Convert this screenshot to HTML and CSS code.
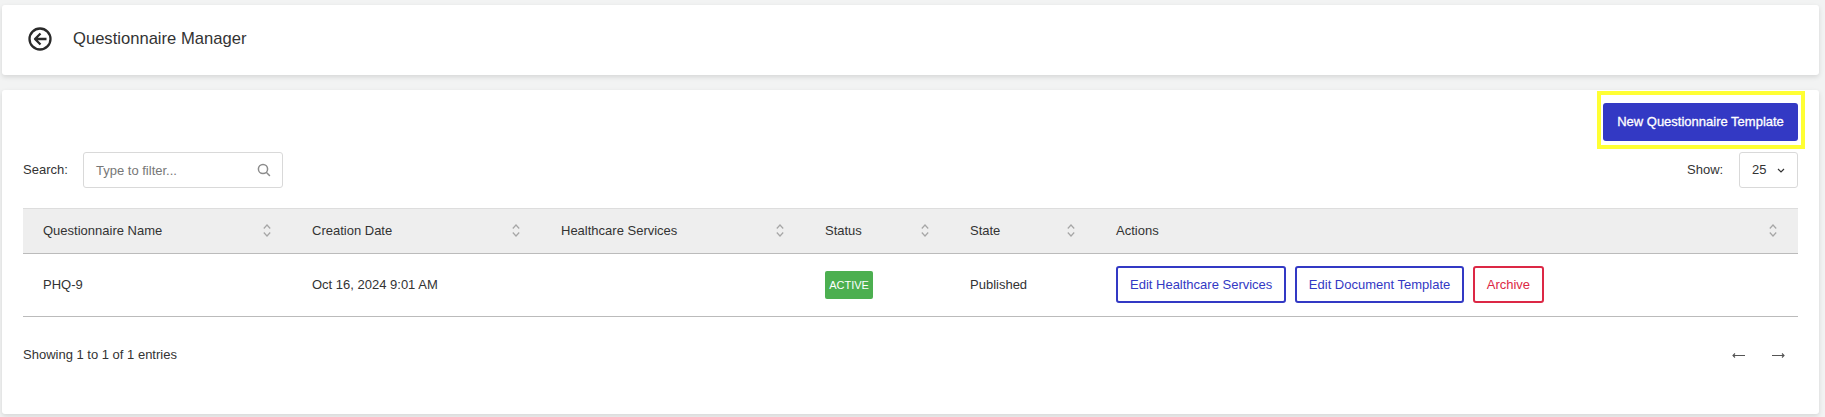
FILE: index.html
```html
<!DOCTYPE html>
<html lang="en">
<head>
<meta charset="utf-8">
<title>Questionnaire Manager</title>
<link rel="stylesheet" href="styles.css">
</head>
<body>
<header class="card topbar">
  <svg class="back" viewBox="0 0 24 24" width="24" height="24" fill="none" stroke="#2a2a2a" stroke-width="2.300" stroke-linejoin="round"><circle cx="12" cy="12" r="10.500"/><path d="M12.500 6.500 7 12l5.500 5.500M7 12H18.500"/></svg>
  <h1 class="title">Questionnaire Manager</h1>
</header>
<main class="card panel">
  <div class="actions-top">
    <div class="highlighted">
      <button class="primary">New Questionnaire Template</button>
    </div>
  </div>
  <div class="filters">
    <label class="search-label">Search:</label>
    <div class="search">
      <span class="placeholder">Type to filter...</span>
      <svg viewBox="0 0 14 14" width="14" height="14" fill="none" stroke="#8c8c8c" stroke-width="1.500" stroke-linecap="round"><circle cx="6" cy="6" r="4.600"/><path d="m9.500 9.500 3 3"/></svg>
    </div>
    <span class="show-label">Show:</span>
    <div class="show">
      <span class="show-value">25</span>
      <svg viewBox="0 0 8 5" width="8" height="5" fill="none" stroke="#333" stroke-width="1.200"><path d="m1 1 3 3 3-3"/></svg>
    </div>
  </div>
  <table class="grid">
    <colgroup>
      <col class="c1"><col class="c2"><col class="c3"><col class="c4"><col class="c5"><col>
    </colgroup>
    <thead>
      <tr>
        <th><div class="th">Questionnaire Name<svg class="sort" viewBox="0 0 8 13" width="8" height="13" fill="none" stroke="#a6a6a6" stroke-width="1.200"><path d="m.8 4.500 3.200-3.500 3.200 3.500M.8 8.500l3.200 3.500 3.200-3.500"/></svg></div></th>
        <th><div class="th">Creation Date<svg class="sort" viewBox="0 0 8 13" width="8" height="13" fill="none" stroke="#a6a6a6" stroke-width="1.200"><path d="m.8 4.500 3.200-3.500 3.200 3.500M.8 8.500l3.200 3.500 3.200-3.500"/></svg></div></th>
        <th><div class="th">Healthcare Services<svg class="sort" viewBox="0 0 8 13" width="8" height="13" fill="none" stroke="#a6a6a6" stroke-width="1.200"><path d="m.8 4.500 3.200-3.500 3.200 3.500M.8 8.500l3.200 3.500 3.200-3.500"/></svg></div></th>
        <th><div class="th">Status<svg class="sort" viewBox="0 0 8 13" width="8" height="13" fill="none" stroke="#a6a6a6" stroke-width="1.200"><path d="m.8 4.500 3.200-3.500 3.200 3.500M.8 8.500l3.200 3.500 3.200-3.500"/></svg></div></th>
        <th><div class="th">State<svg class="sort" viewBox="0 0 8 13" width="8" height="13" fill="none" stroke="#a6a6a6" stroke-width="1.200"><path d="m.8 4.500 3.200-3.500 3.200 3.500M.8 8.500l3.200 3.500 3.200-3.500"/></svg></div></th>
        <th><div class="th">Actions<svg class="sort" viewBox="0 0 8 13" width="8" height="13" fill="none" stroke="#a6a6a6" stroke-width="1.200"><path d="m.8 4.500 3.200-3.500 3.200 3.500M.8 8.500l3.200 3.500 3.200-3.500"/></svg></div></th>
      </tr>
    </thead>
    <tbody>
      <tr>
        <td>PHQ-9</td>
        <td>Oct 16, 2024 9:01 AM</td>
        <td></td>
        <td><span class="badge">ACTIVE</span></td>
        <td>Published</td>
        <td>
          <div class="row-actions">
            <a class="btn">Edit Healthcare Services</a>
            <a class="btn">Edit Document Template</a>
            <a class="btn danger">Archive</a>
          </div>
        </td>
      </tr>
    </tbody>
  </table>
  <div class="footer">
    <span>Showing 1 to 1 of 1 entries</span>
    <div class="pager">
      <svg viewBox="0 0 13 7" width="13" height="7" fill="none" stroke="#555" stroke-width="1.100"><path d="M13 3.500H1M3 1.500 1 3.500 3 5.500"/></svg>
      <svg viewBox="0 0 13 7" width="13" height="7" fill="none" stroke="#555" stroke-width="1.100"><path d="M0 3.500h12M10 1.500l2 2-2 2"/></svg>
    </div>
  </div>
</main>
</body>
</html>
```
FILE: styles.css
```css
* { box-sizing: border-box; }
html, body { margin: 0; padding: 0; }
body {
  width: 1825px;
  height: 417px;
  overflow: hidden;
  background: #f2f3f3;
  font-family: "Liberation Sans", Arial, sans-serif;
  font-size: 13px;
  color: #333;
  padding: 5px 6px 0 2px;
}
.card {
  background: #fff;
  border-radius: 3px;
  box-shadow: 0 2px 5px rgba(0, 0, 0, .12);
}
.topbar {
  height: 70px;
  display: flex;
  align-items: center;
  padding-left: 26px;
  margin-bottom: 15px;
}
.back { display: block; margin-bottom: 3px; }
.title {
  margin: 0 0 3px 21px;
  font-size: 16.600px;
  font-weight: 400;
  color: #333;
}
.panel {
  height: 324px;
  padding: 13px 21px 0;
}
.actions-top {
  display: flex;
  justify-content: flex-end;
}
.highlighted { position: relative; }
.highlighted::after {
  content: "";
  position: absolute;
  inset: -12px -7px -8px -6px;
  border: 4px solid #ffff33;
  pointer-events: none;
}
.primary {
  display: block;
  width: 195px;
  height: 38px;
  padding: 0 0 2px;
  border: 0;
  border-radius: 3px;
  background: #3339c4;
  color: #fff;
  font: 400 13px "Liberation Sans", Arial, sans-serif;
  -webkit-text-stroke: .3px #fff;
}
.filters {
  display: flex;
  align-items: center;
  margin-top: 11px;
  height: 36px;
}
.search-label { width: 60px; padding-bottom: 2px; }
.search {
  width: 200px;
  height: 36px;
  border: 1px solid #d9d9d9;
  border-radius: 3px;
  display: flex;
  align-items: center;
  justify-content: space-between;
  padding: 0 11px 0 12px;
}
.placeholder { color: #777; }
.show-label { margin-left: auto; width: 52px; padding-bottom: 2px; }
.show {
  width: 59px;
  height: 36px;
  border: 1px solid #d9d9d9;
  border-radius: 3px;
  display: flex;
  align-items: center;
  gap: 11px;
  padding-left: 12px;
}
.show-value { padding-bottom: 2px; }
.grid {
  width: 100%;
  margin-top: 20px;
  table-layout: fixed;
  border-collapse: separate;
  border-spacing: 0;
}
.c1 { width: 269px; }
.c2 { width: 249px; }
.c3 { width: 264px; }
.c4 { width: 145px; }
.c5 { width: 146px; }
th {
  height: 46px;
  padding: 0 20px 1px;
  background: #eee;
  border-top: 1px solid #ddd;
  border-bottom: 1px solid #bbb;
  font-weight: 400;
  text-align: left;
}
.th {
  display: flex;
  align-items: center;
  justify-content: space-between;
}
.sort { margin-right: 1px; }
td {
  height: 63px;
  padding: 0 20px 1px;
  border-bottom: 1px solid #bbb;
}
.badge {
  display: inline-block;
  width: 48px;
  height: 28px;
  margin-top: 1px;
  line-height: 28px;
  text-align: center;
  background: #4caf50;
  border-radius: 2px;
  color: #fff;
  font-size: 11px;
  vertical-align: middle;
}
.row-actions { display: flex; gap: 8.500px; }
.btn {
  height: 37px;
  display: flex;
  align-items: center;
  padding: 0 12px 1px;
  border: 2px solid #3339c4;
  border-radius: 3px;
  color: #3339c4;
}
.btn.danger { border-color: #dc2845; color: #dc2845; }
.footer {
  display: flex;
  align-items: center;
  justify-content: space-between;
  margin-top: 29px;
  height: 16px;
}
.pager {
  display: flex;
  gap: 27px;
  margin: 2px 13px 0 0;
}
.pager svg { display: block; }
```
